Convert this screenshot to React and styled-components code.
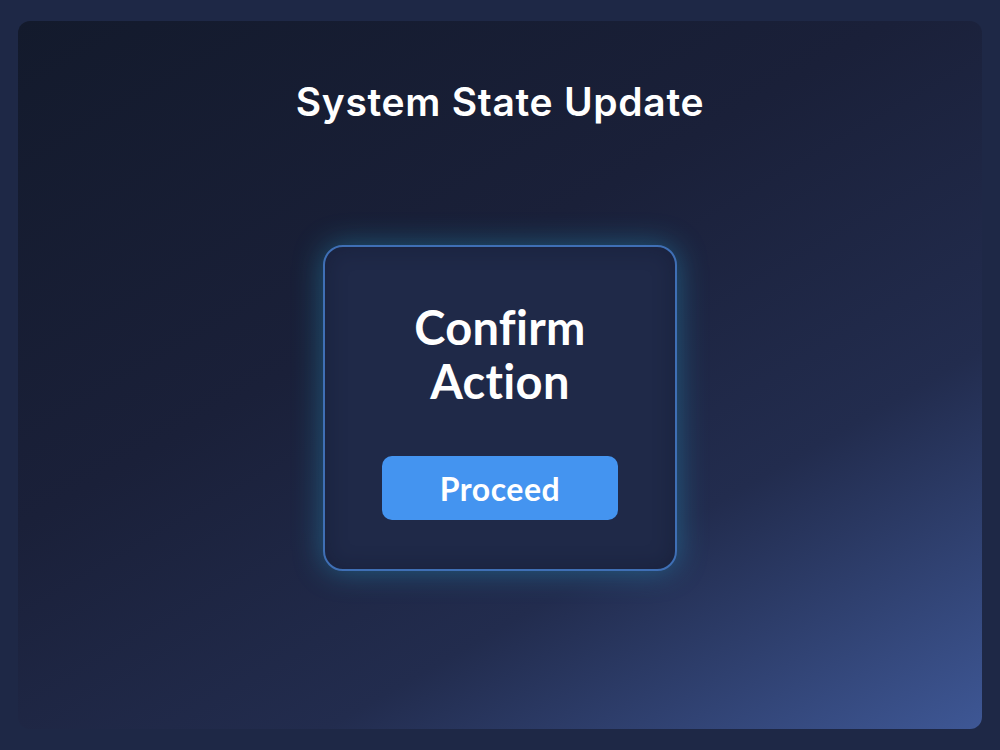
import React from "react";
import styled, { createGlobalStyle } from "styled-components";

const GlobalStyle = createGlobalStyle`
  html, body {
    margin: 0;
    padding: 0;
    background: #1e2846;
  }
  * {
    box-sizing: border-box;
  }
`;

const Page = styled.div`
  width: 1000px;
  height: 750px;
  padding: 21px 18px;
  background: #1e2846;
`;

const Panel = styled.main`
  height: 100%;
  border-radius: 12px;
  background: linear-gradient(
    150deg,
    #131a2c 0%,
    #1a2039 40%,
    #222c4e 70%,
    #3e5795 100%
  );
  display: flex;
  flex-direction: column;
  align-items: center;
  padding-top: 58px;
`;

const Title = styled.h1`
  margin: 0;
  font-family: Inter, "Liberation Sans", sans-serif;
  font-weight: 600;
  font-size: 39px;
  line-height: 46px;
  color: #ffffff;
  letter-spacing: 0.7px;
`;

const Card = styled.section`
  margin-top: 120px;
  width: 354px;
  height: 326px;
  border: 2px solid #3f6fb5;
  border-radius: 20px;
  background: #1f2948;
  box-shadow: 0 0 30px rgba(40, 185, 230, 0.38),
    inset 0 0 22px rgba(10, 14, 30, 0.3);
  display: flex;
  flex-direction: column;
  align-items: center;
  padding-top: 53px;
`;

const Heading = styled.h2`
  margin: 0;
  font-family: Lato, "Open Sans", sans-serif;
  font-weight: 700;
  font-size: 47px;
  line-height: 54px;
  letter-spacing: 0.3px;
  text-align: center;
  color: #ffffff;
`;

const Button = styled.button`
  margin-top: 48px;
  width: 236px;
  height: 64px;
  border: none;
  border-radius: 10px;
  background: #4494f0;
  color: #ffffff;
  font-family: Lato, "Open Sans", sans-serif;
  font-weight: 700;
  font-size: 32px;
  letter-spacing: 0.5px;
  cursor: pointer;
`;

export default function App() {
  return (
    <>
      <GlobalStyle />
      <Page>
        <Panel>
          <Title>System State Update</Title>
          <Card>
            <Heading>
              Confirm
              <br />
              Action
            </Heading>
            <Button>Proceed</Button>
          </Card>
        </Panel>
      </Page>
    </>
  );
}
